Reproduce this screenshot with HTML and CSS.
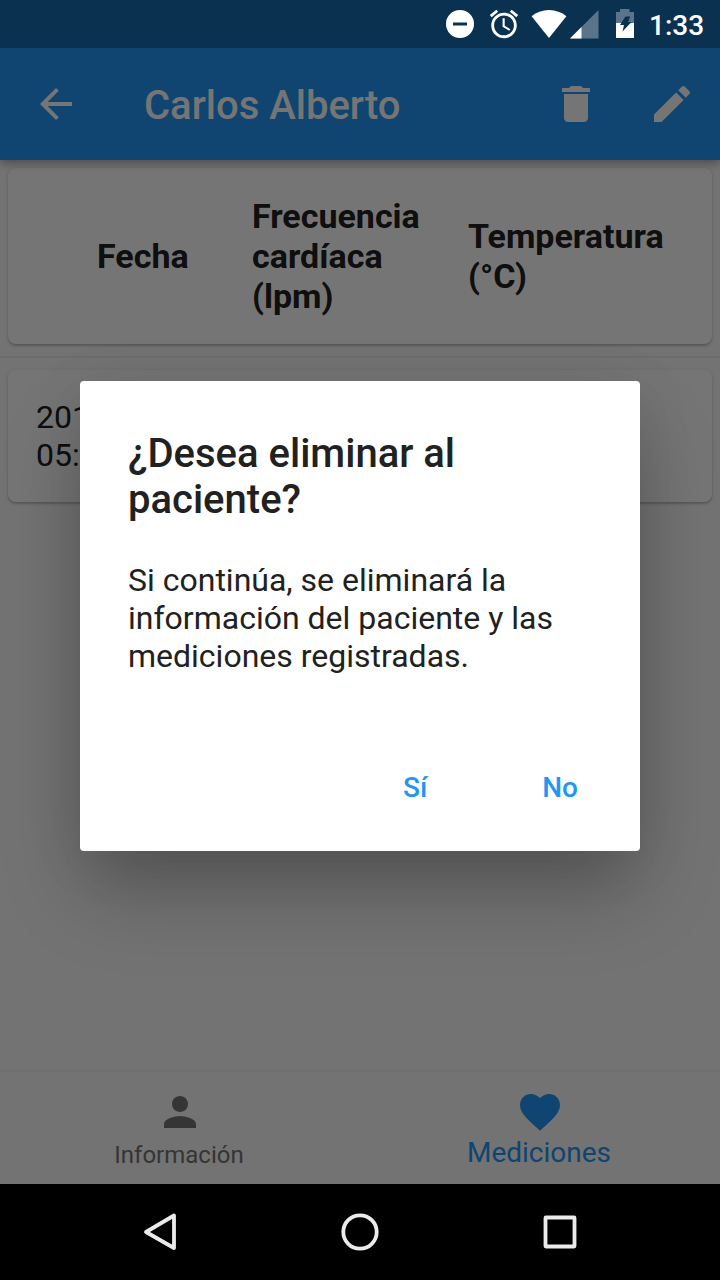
FILE: index.html
```html
<!DOCTYPE html>
<html lang="es">
<head>
<meta charset="utf-8">
<title>Carlos Alberto</title>
<link rel="stylesheet" href="styles.css">
</head>
<body>
<div class="screen">
  <header class="status-bar">
    <svg class="dnd" width="28" height="28" viewBox="0 0 28 28"><path fill="#fff" fill-rule="evenodd" d="M14 0a14 14 0 1 0 0 28 14 14 0 0 0 0-28zM7 12.4h14v3.2H7z"/></svg>
    <svg class="alarm" width="34" height="34" viewBox="0 0 24 24"><path fill="#fff" d="M22 5.72l-4.6-3.86-1.29 1.53 4.6 3.86L22 5.72zM7.88 3.39L6.6 1.86 2 5.71l1.29 1.53 4.59-3.85zM12.5 8H11v6l4.75 2.85.75-1.23-4-2.37V8zM12 4c-4.97 0-9 4.03-9 9s4.02 9 9 9c4.97 0 9-4.03 9-9s-4.03-9-9-9zm0 16c-3.87 0-7-3.13-7-7s3.13-7 7-7 7 3.13 7 7-3.13 7-7 7z"/></svg>
    <svg class="wifi" width="36" height="28" viewBox="0 0 36 28"><path fill="#fff" d="M18 28L.6 6.2C5.500 2.300 11.200 0 18 0s12.500 2.300 17.400 6.200z"/></svg>
    <svg class="signal" width="29" height="29" viewBox="0 0 29 29"><path fill="#5a748b" d="M0 28.500L28.500 0v28.500z"/><path fill="#fff" d="M0 28.500L11.500 17v11.500z"/></svg>
    <svg class="battery" width="18" height="29" viewBox="0 0 18 29"><path fill="#5a748b" d="M0 3h4V0h9.500v3H18v11H0z"/><path fill="#fff" d="M0 14h18v15H0z"/><path fill="#0b3150" d="M9.500 7.500h4.700l-2 5.500h3.300L6.500 22.500 8 16H4z"/></svg>
    <span class="clock">1:33</span>
  </header>

  <div class="app-bar">
    <svg class="icon" viewBox="0 0 24 24"><path d="M20 11H7.830l5.590-5.590L12 4l-8 8 8 8 1.410-1.410L7.830 13H20v-2z"/></svg>
    <h1 class="app-title">Carlos Alberto</h1>
    <svg class="icon" viewBox="0 0 24 24"><path d="M6 19c0 1.100.9 2 2 2h8c1.100 0 2-.9 2-2V7H6v12zM19 4h-3.500l-1-1h-5l-1 1H5v2h14V4z"/></svg>
    <svg class="icon edit" viewBox="0 0 24 24"><path d="M3 17.250V21h3.750L17.810 9.940l-3.750-3.750L3 17.250zM20.710 7.040c.39-.39.39-1.020 0-1.410l-2.340-2.340c-.39-.39-1.020-.39-1.410 0l-1.830 1.830 3.750 3.750 1.830-1.830z"/></svg>
  </div>

  <main class="content">
    <div class="card head">
      <span>Fecha</span>
      <span>Frecuencia<br>cardíaca<br>(lpm)</span>
      <span>Temperatura<br>(°C)</span>
    </div>
    <hr class="divider">
    <div class="card row">201<br>05:</div>
  </main>

  <nav class="tabs">
    <div class="tab">
      <svg class="tab-icon" viewBox="0 0 24 24"><path d="M12 12c2.210 0 4-1.790 4-4s-1.790-4-4-4-4 1.790-4 4 1.790 4 4 4zm0 2c-2.670 0-8 1.340-8 4v2h16v-2c0-2.660-5.330-4-8-4z"/></svg>
      <span class="tab-label">Información</span>
    </div>
    <div class="tab active">
      <svg class="tab-icon" viewBox="0 0 24 24"><path d="M12 21.350l-1.450-1.320C5.400 15.360 2 12.280 2 8.500 2 5.420 4.420 3 7.500 3c1.740 0 3.410.81 4.500 2.090C13.090 3.810 14.760 3 16.500 3 19.580 3 22 5.420 22 8.500c0 3.780-3.400 6.860-8.550 11.540L12 21.350z"/></svg>
      <span class="tab-label">Mediciones</span>
    </div>
  </nav>

  <div class="system-nav">
    <svg width="40" height="40" viewBox="0 0 40 40"><path d="M34 3.500v32.500L6 20z"/></svg>
    <svg width="40" height="40" viewBox="0 0 40 40"><circle cx="20" cy="20" r="16.700"/></svg>
    <svg width="40" height="40" viewBox="0 0 40 40"><rect x="5.500" y="5.500" width="29" height="29" rx=".5"/></svg>
  </div>

  <div class="scrim">
    <div class="dialog" role="dialog">
      <h2 class="dialog-title">¿Desea eliminar al<br>paciente?</h2>
      <p class="dialog-text">Si continúa, se eliminará la<br>información del paciente y las<br>mediciones registradas.</p>
      <div class="actions"><span>Sí</span><span>No</span></div>
    </div>
  </div>
</div>
</body>
</html>
```
FILE: styles.css
```css
* { box-sizing: border-box; }
body {
  margin: 0;
  font-family: Roboto, sans-serif;
  color: #212121;
}
h1, h2, p { margin: 0; }
svg { flex: none; display: block; }

.screen {
  position: relative;
  width: 720px;
  height: 1280px;
  display: flex;
  flex-direction: column;
  overflow: hidden;
  background: #fafafa;
}

.status-bar {
  position: relative;
  z-index: 3;
  height: 48px;
  flex: none;
  display: flex;
  align-items: flex-start;
  padding-left: 446px;
  background: #0b3150;
}
.dnd { margin-top: 10px; }
.alarm { margin: 7px 0 0 13px; }
.wifi { margin: 10px 0 0 10px; }
.signal { margin: 10px 0 0 3px; }
.battery { margin: 9px 0 0 17px; }
.clock {
  margin-left: 15px;
  font-size: 28px;
  font-weight: 500;
  line-height: 51px;
  color: #fff;
}

.app-bar {
  position: relative;
  height: 112px;
  flex: none;
  display: flex;
  align-items: center;
  padding: 0 24px 0 32px;
  background: #2196f3;
  box-shadow: 0 4px 8px rgba(0, 0, 0, .2), 0 2px 10px rgba(0, 0, 0, .16);
}
.icon { width: 48px; height: 48px; fill: #fff; }
.icon.edit { margin-left: 48px; }
.app-title {
  flex: 1;
  padding: 3px 0 0 64px;
  font-size: 40px;
  font-weight: 500;
  line-height: 47px;
  color: #fff;
}

.content { flex: 1; padding-top: 8px; }
.card {
  margin: 0 8px;
  border-radius: 8px;
  background: #fff;
  box-shadow: 0 2px 2px rgba(0, 0, 0, .16), 0 1px 4px rgba(0, 0, 0, .12);
}
.head {
  height: 176px;
  display: grid;
  grid-template-columns: 155px 216px auto;
  align-items: center;
  padding: 0 0 0 89px;
  font-size: 34px;
  font-weight: 700;
  line-height: 40px;
}
.divider {
  height: 2px;
  margin: 12px 0;
  border: 0;
  background: #ebebeb;
}
.row {
  height: 132px;
  padding: 28px;
  font-size: 32px;
  line-height: 38px;
}

.tabs {
  height: 112px;
  flex: none;
  display: grid;
  grid-template-columns: 1fr 1fr;
  background: #fafafa;
  box-shadow: 0 -1px 3px rgba(0, 0, 0, .06);
}
.tab {
  display: flex;
  flex-direction: column;
  align-items: center;
  padding-top: 16px;
  color: #757575;
  font-size: 24px;
  line-height: 38px;
}
.tab.active { color: #2196f3; font-size: 28px; line-height: 33px; }
.tab-icon { width: 48px; height: 48px; fill: currentColor; }
.tab-label { margin-right: 2px; }

.system-nav {
  height: 96px;
  flex: none;
  display: flex;
  justify-content: space-between;
  align-items: center;
  padding: 0 140px;
  background: #000;
}
.system-nav svg {
  fill: none;
  stroke: #ebebeb;
  stroke-width: 3.800;
  stroke-linejoin: round;
}

.scrim {
  position: absolute;
  inset: 48px 0 96px;
  z-index: 2;
  display: flex;
  justify-content: center;
  align-items: center;
  background: rgba(0, 0, 0, .54);
}
.dialog {
  width: 560px;
  height: 470px;
  display: flex;
  flex-direction: column;
  padding: 50px 48px 16px;
  border-radius: 4px;
  background: #fff;
  box-shadow: 0 44px 76px -6px rgba(0, 0, 0, .26), 0 8px 60px 0 rgba(0, 0, 0, .08);
}
.dialog-title { font-size: 40px; font-weight: 500; line-height: 46px; }
.dialog-text { margin-top: 38px; font-size: 32px; line-height: 38px; }
.actions {
  display: flex;
  justify-content: flex-end;
  gap: 115px;
  margin-top: auto;
  padding: 0 14px 31px 0;
  font-size: 28px;
  font-weight: 500;
  line-height: 33px;
  color: #2196f3;
}
```
